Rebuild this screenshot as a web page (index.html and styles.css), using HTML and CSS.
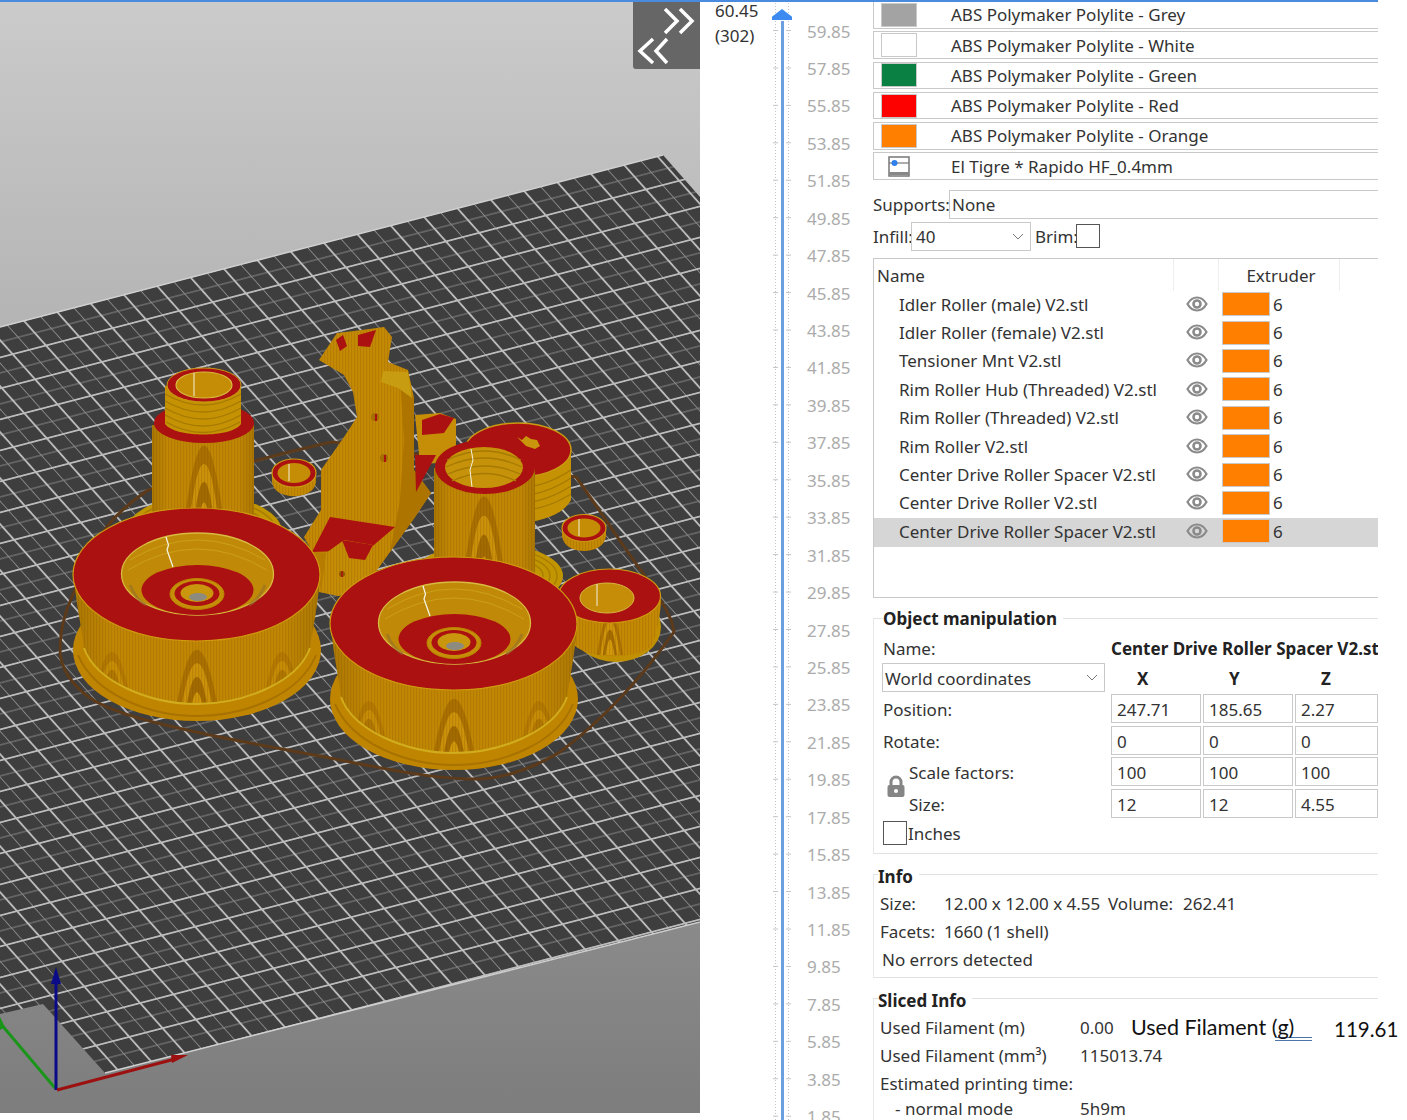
FILE: index.html
```html
<!DOCTYPE html>
<html lang="en">
<head>
<meta charset="utf-8">
<title>Slicer preview</title>
<link rel="stylesheet" href="styles.css">
</head>
<body>
<svg class="sprites" aria-hidden="true">
  <symbol id="eye" viewBox="0 0 22 16">
    <path d="M1.500 8C4 3.600 7.300 1.500 11 1.500S18 3.600 20.500 8C18 12.400 14.700 14.500 11 14.500S4 12.400 1.500 8Z" fill="none" stroke="#8a8a8a" stroke-width="2.200"/>
    <circle cx="11" cy="8" r="3.500" fill="none" stroke="#8a8a8a" stroke-width="2.600"/>
  </symbol>
</svg>
<div class="topline"></div>
<main class="app">
  <section class="viewport">
    <svg class="scene" viewBox="0 0 700 1113" width="700" height="1113" aria-hidden="true">
      <defs>
        <pattern id="grid" width="100" height="100" patternUnits="userSpaceOnUse" patternTransform="matrix(.3333 -.0867 .2246 .2516 551.700 958)">
          <rect width="100" height="100" fill="#3e3e3e"/>
          <path d="M50 0V100M0 50H100" stroke="#8a8a8a" stroke-width="3"/>
          <path d="M0 0V100M100 0V100M0 0H100M0 100H100" stroke="#bcbcbc" stroke-width="6"/>
        </pattern>
        <pattern id="stripes" width="3" height="8" patternUnits="userSpaceOnUse">
          <rect width="1.200" height="8" fill="#7a4c00" opacity=".22"/>
        </pattern>
        <linearGradient id="shade" x1="0" x2="1" y1="0" y2="0">
          <stop offset="0" stop-color="#6a4600" stop-opacity=".28"/>
          <stop offset=".15" stop-color="#6a4600" stop-opacity=".04"/>
          <stop offset=".85" stop-color="#6a4600" stop-opacity=".04"/>
          <stop offset="1" stop-color="#6a4600" stop-opacity=".28"/>
        </linearGradient>
        <g id="arch">
          <path d="M-24 0C-17-40-10-78 0-78S17-40 24 0Z" fill="#ad7200"/>
          <path d="M-18 0C-13-32-8-62 0-62S13-32 18 0Z" fill="#d0950a"/>
          <path d="M-13 0C-9-24-6-46 0-46S9-24 13 0Z" fill="#a56c00"/>
          <path d="M-8 0C-6-14-3-28 0-28S6-14 8 0Z" fill="#d59a0c"/>
        </g>
        <path id="rollerBody" d="M74 578C77 610 82 628 84 648C96 682 150 704 197 704S298 682 310 648C313 628 317 610 320 578Z"/>
        <path id="colA" d="M152 425V540H254V425Z"/>
        <path id="colB" d="M434 468V585H535V468Z"/>
        <clipPath id="rollerClip"><use href="#rollerBody"/></clipPath>
        <clipPath id="colAClip"><use href="#colA"/></clipPath>
        <clipPath id="colBClip"><use href="#colB"/></clipPath>
        <g id="roller">
          <ellipse cx="197" cy="650" rx="124" ry="71" fill="#c08500"/>
          <path d="M78 655C95 695 150 716 197 716S300 695 316 655" fill="none" stroke="#a87200" stroke-width="2"/>
          <use href="#rollerBody" fill="#c58a04"/>
          <g clip-path="url(#rollerClip)">
            <use href="#arch" transform="translate(197 716) scale(.95 .85)"/>
            <use href="#arch" transform="translate(112 695) scale(.75 .55)" opacity=".55"/>
            <use href="#arch" transform="translate(282 695) scale(.75 .55)" opacity=".55"/>
          </g>
          <use href="#rollerBody" fill="url(#stripes)"/>
          <use href="#rollerBody" fill="url(#shade)"/>
          <path d="M84 648C96 682 150 704 197 704S298 682 310 648" fill="none" stroke="#d1ac1c" stroke-width="2"/>
          <ellipse cx="196.500" cy="574.500" rx="123.500" ry="66.500" fill="#ab1111" stroke="#cf9a10" stroke-width="1.200"/>
          <ellipse cx="197.500" cy="574" rx="76" ry="41" fill="#c08a08" stroke="#d8bb40" stroke-width="1.300"/>
          <path d="M130 560Q197 520 265 560M128 570Q197 528 267 570" fill="none" stroke="#d2a820" stroke-width="1" opacity=".7"/>
          <path d="M130 585Q136 600 146 605M265 585Q259 600 249 605" fill="none" stroke="#93702a" stroke-width="3" opacity=".6"/>
          <ellipse cx="197.500" cy="590" rx="56" ry="25" fill="#ab1111"/>
          <ellipse cx="197" cy="594" rx="27" ry="15.500" fill="#c68e08" stroke="#b88200" stroke-width="1"/>
          <ellipse cx="197" cy="593.500" rx="22.500" ry="12.500" fill="#ab1111"/>
          <ellipse cx="197" cy="593" rx="16.500" ry="9" fill="#c9960e"/>
          <ellipse cx="198" cy="597" rx="9" ry="4" fill="#8d8a80"/>
          <path d="M166 537L168.500 545 167 550 173 567" fill="none" stroke="#f4f1e0" stroke-width="1.300"/>
        </g>
      </defs>

      <polygon class="plate" points="0,327 663,155 700,197 700,922 105,1073 43,1004 0,1014"/>
      <path class="plate-edge" d="M0 327L663 155M700 922L105 1073"/>
      <path class="skirt" d="M60 650C60 620 70 600 86 566C96 536 112 515 148 490C220 470 300 448 333 442L576 477C600 510 625 550 643 573C660 600 672 615 674 632C640 680 600 722 560 752C530 770 500 780 470 779C430 778 390 770 340 760C290 750 240 742 187 730C150 722 110 712 90 698C72 685 60 668 60 650Z"/>

      <!-- rear-left column -->
      <ellipse cx="204" cy="532" rx="78" ry="37" fill="#c09500"/>
      <g class="ridge">
        <ellipse cx="204" cy="532" rx="72" ry="33"/><ellipse cx="204" cy="532" rx="65" ry="29"/><ellipse cx="204" cy="532" rx="58" ry="25"/>
      </g>
      <use href="#colA" fill="#c58a04"/>
      <g clip-path="url(#colAClip)"><use href="#arch" transform="translate(204 534) scale(.9 1.130)"/></g>
      <use href="#colA" fill="url(#stripes)"/>
      <use href="#colA" fill="url(#shade)"/>
      <ellipse cx="204" cy="423" rx="50" ry="20" fill="#ab1111"/>
      <path d="M165 386V424C175 438 232 438 241 424V386Z" fill="#c59204"/>
      <g class="ridge">
        <path d="M165 394Q203 416 241 394M165 401Q203 423 241 401M165 408Q203 430 241 408M165 415Q203 437 241 415M166 422Q203 443 240 422"/>
      </g>
      <ellipse cx="204" cy="385" rx="37" ry="17" fill="#ab1111" stroke="#c99a12" stroke-width="1"/>
      <ellipse cx="204" cy="385" rx="28" ry="13" fill="#c58c06" stroke="#d8bb40" stroke-width="1.200"/>
      <path d="M194 373V396" stroke="#f4f1e0" stroke-width="1"/>

      <!-- small ring, left -->
      <path d="M272 475V482C274 501 314 501 316 482V475Z" fill="#c58a04"/>
      <path d="M272 475V482C274 501 314 501 316 482V475Z" fill="url(#stripes)"/>
      <ellipse cx="294" cy="473" rx="22" ry="14" fill="#ab1111" stroke="#c99a12" stroke-width="1.200"/>
      <ellipse cx="294" cy="473" rx="16.500" ry="10" fill="#c58c06"/>
      <path d="M289 464V481" stroke="#f4f1e0" stroke-width="1"/>

      <!-- tensioner mount -->
      <path d="M319 360L337 333 362 330 384 327 392 337 388 362 408 370 414 398 414 470 431 493 415 517 375 573 370 583 339 596 319 592 315 556 304 537 321 510 321 470 344 437 357 417 353 392 344 375Z" fill="#c58a04"/>
      <path d="M319 360L337 333 362 330 384 327 392 337 388 362 408 370 414 398 414 470 431 493 415 517 375 573 370 583 339 596 319 592 315 556 304 537 321 510 321 470 344 437 357 417 353 392 344 375Z" fill="url(#stripes)"/>
      <path d="M400 378L414 398 414 470 431 493 415 517 390 552 400 500 404 440Z" fill="#ad7400"/>
      <path d="M358 335L376 330 370 347 358 346Z" fill="#ab1111"/>
      <path d="M336 340L343 335 347 346 340 351Z" fill="#ab1111"/>
      <path d="M383 371L408 372 412 398 398 388 381 382Z" fill="#c89c10"/>
      <path d="M415 415L440 413 456 419 456 462 420 464Z" fill="#c68d06"/>
      <path d="M422 420L440 414 454 418 444 433 422 435Z" fill="#ab1111"/>
      <path d="M415 455L436 455 416 492Z" fill="#ab1111"/>
      <circle cx="375" cy="417" r="4" fill="#a26f00"/><path d="M376 414V421" stroke="#ab1111" stroke-width="2"/>
      <circle cx="384" cy="458" r="4" fill="#a26f00"/><path d="M385 455V462" stroke="#ab1111" stroke-width="2"/>
      <path d="M330 517L395 527 368 550 312 552Z" fill="#ab1111"/>
      <path d="M326 553L344 540 373 545 370 583 339 596 321 592Z" fill="#c68d06"/>
      <path d="M326 553L344 540 373 545 370 583 339 596 321 592Z" fill="url(#stripes)"/>
      <path d="M342 540L373 545 365 560 349 558Z" fill="#ab1111"/>
      <path d="M304 537L312 552 326 553 321 592 315 556Z" fill="#b67c00"/>
      <circle cx="342" cy="574" r="3" fill="#8e5a00"/><path d="M342 571V577" stroke="#ab1111" stroke-width="1.500"/>

      <!-- rear disc -->
      <path d="M464 452V500C480 530 555 530 571 500V452Z" fill="#c59204"/>
      <g class="ridge">
        <path d="M464 470Q518 505 571 470M464 478Q518 513 571 478M464 486Q518 520 571 486M464 494Q518 527 571 494"/>
      </g>
      <ellipse cx="518" cy="450" rx="53" ry="27" fill="#ab1111" stroke="#c99a12" stroke-width="1.500"/>
      <path d="M517 437l5 3 4-4 5 3 6 1 3 6-5 3-9-3-4-4Z" fill="#c8950c"/>

      <!-- rear-right column -->
      <ellipse cx="488" cy="576" rx="75" ry="33" fill="#c09500"/>
      <g class="ridge">
        <ellipse cx="488" cy="576" rx="69" ry="29"/><ellipse cx="488" cy="576" rx="62" ry="25"/><ellipse cx="488" cy="576" rx="55" ry="21"/>
      </g>
      <use href="#colB" fill="#c58a04"/>
      <g clip-path="url(#colBClip)"><use href="#arch" transform="translate(484 590) scale(.95 1.200)"/></g>
      <use href="#colB" fill="url(#stripes)"/>
      <use href="#colB" fill="url(#shade)"/>
      <ellipse cx="485" cy="467" rx="50" ry="27" fill="#ab1111"/>
      <ellipse cx="484" cy="467.500" rx="39" ry="20.500" fill="#c5920a"/>
      <g class="ridge">
        <path d="M447 460Q484 442 521 460M446 467Q484 449 522 467M448 474Q484 458 520 474M452 481Q484 466 516 481"/>
      </g>
      <path d="M471 449L473 460 470 470 472 487" fill="none" stroke="#f4f1e0" stroke-width="1"/>

      <!-- small ring, right -->
      <path d="M562 530V536C564 556 604 556 606 536V530Z" fill="#c58a04"/>
      <path d="M562 530V536C564 556 604 556 606 536V530Z" fill="url(#stripes)"/>
      <ellipse cx="584" cy="528" rx="22" ry="13.500" fill="#ab1111" stroke="#c99a12" stroke-width="1.200"/>
      <ellipse cx="584" cy="528" rx="16.500" ry="9.500" fill="#c58c06"/>
      <path d="M579 519V536" stroke="#f4f1e0" stroke-width="1"/>

      <!-- rim roller -->
      <ellipse cx="616" cy="627" rx="45" ry="35" fill="#c09000"/>
      <path d="M564 600C568 625 572 640 574 645C590 660 640 660 652 645C656 635 660 620 661 600Z" fill="#c58a04"/>
      <use href="#arch" transform="translate(610 655) scale(.55 .55)"/>
      <path d="M564 600C568 625 572 640 574 645C590 660 640 660 652 645C656 635 660 620 661 600Z" fill="url(#stripes)"/>
      <ellipse cx="609.500" cy="596" rx="51" ry="27" fill="#ab1111" stroke="#cf9a10" stroke-width="1.200"/>
      <ellipse cx="607" cy="598" rx="27" ry="15" fill="#c68e08" stroke="#d8bb40" stroke-width="1"/>
      <path d="M597 584V606" stroke="#f4f1e0" stroke-width="1"/>

      <use href="#roller"/>
      <use href="#roller" x="257" y="49"/>

      <!-- axes -->
      <g class="axes">
        <path d="M55 1088L0 1023" stroke="#1a951a" stroke-width="3"/>
        <path d="M0 1017L5 1027 0 1030Z" fill="#1a951a"/>
        <path d="M56 1090V980" stroke="#0b0b88" stroke-width="3"/>
        <path d="M56 967L61 984H51Z" fill="#0b0b88"/>
        <path d="M57 1090L175 1059" stroke="#9c1010" stroke-width="3"/>
        <path d="M188 1055L172 1063 171 1055Z" fill="#9c1010"/>
      </g>
    </svg>
    <button class="collapse" type="button" aria-label="Toggle sidebar">
      <svg viewBox="0 0 67 67" width="67" height="67">
        <path d="M32 7L44 19 32 31M47 7L59 19 47 31M20 37L7 49 20 61M34 37L23 49 34 61" fill="none" stroke="#fff" stroke-width="3.500"/>
      </svg>
    </button>
  </section>

  <section class="slider">
    <div class="readout"><span>60.45</span><span>(302)</span></div>
    <div class="track"><div class="thumb"></div><div class="rail"></div></div>
    <ol class="ticks">
      <li>59.85</li><li>57.85</li><li>55.85</li><li>53.85</li><li>51.85</li><li>49.85</li><li>47.85</li><li>45.85</li>
      <li>43.85</li><li>41.85</li><li>39.85</li><li>37.85</li><li>35.85</li><li>33.85</li><li>31.85</li><li>29.85</li>
      <li>27.85</li><li>25.85</li><li>23.85</li><li>21.85</li><li>19.85</li><li>17.85</li><li>15.85</li><li>13.85</li>
      <li>11.85</li><li>9.85</li><li>7.85</li><li>5.85</li><li>3.85</li><li>1.85</li>
    </ol>
  </section>

  <aside class="panel">
    <ul class="presets">
      <li class="preset"><span class="chip chip-grey"></span><span>ABS Polymaker Polylite - Grey</span></li>
      <li class="preset"><span class="chip chip-white"></span><span>ABS Polymaker Polylite - White</span></li>
      <li class="preset"><span class="chip chip-green"></span><span>ABS Polymaker Polylite - Green</span></li>
      <li class="preset"><span class="chip chip-red"></span><span>ABS Polymaker Polylite - Red</span></li>
      <li class="preset"><span class="chip chip-orange"></span><span>ABS Polymaker Polylite - Orange</span></li>
      <li class="preset"><span class="chip chip-icon">
        <svg viewBox="0 0 22 21" width="22" height="21"><rect x="1" y="1" width="20" height="19" fill="#fff" stroke="#777" stroke-width="1.500"/><path d="M1 7H21" stroke="#777" stroke-width="1.200"/><path d="M1 17.500H21" stroke="#888" stroke-width="3"/><circle cx="6.500" cy="7" r="3" fill="#2f80ed"/></svg>
      </span><span>El Tigre * Rapido HF_0.4mm</span></li>
    </ul>

    <div class="supports"><span>Supports:</span><span class="field field-wide">None</span></div>
    <div class="infill">
      <span>Infill:</span>
      <span class="field combo combo-infill">40<svg class="chev" viewBox="0 0 12 7" width="12" height="7"><path d="M1 1L6 6 11 1" fill="none" stroke="#777" stroke-width="1"/></svg></span>
      <span class="brim">Brim:</span><span class="checkbox"></span>
    </div>

    <div class="objects">
      <div class="objects-head"><span class="col-name">Name</span><span class="col-eye"></span><span class="col-ext">Extruder</span></div>
      <div class="obj"><span class="obj-name">Idler Roller (male) V2.stl</span><svg class="eye"><use href="#eye"/></svg><span class="obj-chip"></span><span class="obj-num">6</span></div>
      <div class="obj"><span class="obj-name">Idler Roller (female) V2.stl</span><svg class="eye"><use href="#eye"/></svg><span class="obj-chip"></span><span class="obj-num">6</span></div>
      <div class="obj"><span class="obj-name">Tensioner Mnt V2.stl</span><svg class="eye"><use href="#eye"/></svg><span class="obj-chip"></span><span class="obj-num">6</span></div>
      <div class="obj"><span class="obj-name">Rim Roller Hub (Threaded) V2.stl</span><svg class="eye"><use href="#eye"/></svg><span class="obj-chip"></span><span class="obj-num">6</span></div>
      <div class="obj"><span class="obj-name">Rim Roller (Threaded) V2.stl</span><svg class="eye"><use href="#eye"/></svg><span class="obj-chip"></span><span class="obj-num">6</span></div>
      <div class="obj"><span class="obj-name">Rim Roller V2.stl</span><svg class="eye"><use href="#eye"/></svg><span class="obj-chip"></span><span class="obj-num">6</span></div>
      <div class="obj"><span class="obj-name">Center Drive Roller Spacer V2.stl</span><svg class="eye"><use href="#eye"/></svg><span class="obj-chip"></span><span class="obj-num">6</span></div>
      <div class="obj"><span class="obj-name">Center Drive Roller V2.stl</span><svg class="eye"><use href="#eye"/></svg><span class="obj-chip"></span><span class="obj-num">6</span></div>
      <div class="obj obj-selected"><span class="obj-name">Center Drive Roller Spacer V2.stl</span><svg class="eye"><use href="#eye"/></svg><span class="obj-chip"></span><span class="obj-num">6</span></div>
    </div>

    <section class="group group-manip">
      <h2 class="group-title title-manip">Object manipulation</h2>
      <div class="name-row"><span class="name-label">Name:</span><strong class="name-value">Center Drive Roller Spacer V2.stl</strong></div>
      <div class="manip">
        <span class="field combo combo-coords"><span class="nudge">World coordinates</span><svg class="chev" viewBox="0 0 12 7" width="12" height="7"><path d="M1 1L6 6 11 1" fill="none" stroke="#777" stroke-width="1"/></svg></span>
        <strong class="axis">X</strong><strong class="axis">Y</strong><strong class="axis">Z</strong>
        <span class="m-label m-full">Position:</span><span class="field cell">247.71</span><span class="field cell">185.65</span><span class="field cell">2.27</span>
        <span class="m-label m-full">Rotate:</span><span class="field cell">0</span><span class="field cell">0</span><span class="field cell">0</span>
        <span class="lock"><svg viewBox="0 0 20 24" width="20" height="24"><path d="M5 10V7a5 5 0 0 1 10 0v3" fill="none" stroke="#858585" stroke-width="3"/><rect x="1.500" y="10" width="17" height="12" rx="2" fill="#858585"/><circle cx="10" cy="16" r="2" fill="#fff"/></svg></span>
        <span class="m-label">Scale factors:</span><span class="field cell">100</span><span class="field cell">100</span><span class="field cell">100</span>
        <span class="m-label">Size:</span><span class="field cell">12</span><span class="field cell">12</span><span class="field cell">4.55</span>
      </div>
      <div class="inches"><span class="checkbox"></span><span class="nudge">Inches</span></div>
    </section>

    <section class="group group-info">
      <h2 class="group-title title-info">Info</h2>
      <div class="info-row"><span class="info-key">Size:</span><span class="info-size">12.00 x 12.00 x 4.55</span><span class="info-vol">Volume:</span><span>262.41</span></div>
      <div class="info-row"><span class="info-key">Facets:</span><span>1660 (1 shell)</span></div>
      <div class="info-row info-ok">No errors detected</div>
    </section>

    <section class="group group-sliced">
      <h2 class="group-title title-info">Sliced Info</h2>
      <div class="info-row"><span class="sl-key">Used Filament (m)</span><span class="sl-val">0.00</span><span class="note note-label">Used Filament (<span class="squiggle">g)</span></span><span class="note note-num">119.61</span></div>
      <div class="info-row"><span class="sl-key">Used Filament (mm³)</span><span>115013.74</span></div>
      <div class="info-row"><span>Estimated printing time:</span></div>
      <div class="info-row info-mode"><span class="sl-mode">- normal mode</span><span>5h9m</span></div>
    </section>
  </aside>
</main>
</body>
</html>
```
FILE: styles.css
```css
* { box-sizing: border-box; }
html, body { margin: 0; padding: 0; height: 1120px; overflow: hidden; background: #fff; }
body { font-family: "Noto Sans", "Open Sans", sans-serif; font-size: 17px; color: #333; line-height: 1; position: relative; width: 1407px; }
ul, ol { list-style: none; margin: 0; padding: 0; }
h2 { margin: 0; }

.sprites { position: absolute; width: 0; height: 0; }
.topline { position: absolute; left: 0; top: 0; width: 1378px; height: 2px; background: #4a8be0; z-index: 2; }

.app { display: grid; grid-template-columns: 700px 173px 505px; height: 1120px; }

/* 3D view */
.viewport { position: relative; height: 1113px; background: linear-gradient(#cbcbcb, #7d7d7d); overflow: hidden; }
.scene { display: block; }
.plate { fill: url(#grid); }
.plate-edge { fill: none; stroke: #cfcfcf; stroke-width: 1.500; }
.skirt { fill: none; stroke: #5c3a1a; stroke-width: 3; }
.ridge { fill: none; stroke: #a67a00; stroke-width: 1.300; }
.collapse { position: absolute; right: 0; top: 2px; width: 67px; height: 67px; padding: 0; border: 0; border-bottom-left-radius: 3px; background: #666; }
.collapse svg { display: block; }

/* layer slider */
.slider { display: flex; height: 1120px; overflow: hidden; }
.readout { width: 72px; padding: 1.500px 0 0 15px; display: flex; flex-direction: column; gap: 7px; color: #333; font-size: 17px; line-height: 18px; }
.track { width: 20px; display: flex; flex-direction: column; align-items: center; padding-top: 9px;
  background-image:
    linear-gradient(#c4c4c4 0 1px, transparent 1px),
    linear-gradient(#c4c4c4 0 1px, transparent 1px),
    repeating-linear-gradient(#c4c4c4 0 1px, transparent 1px 3px),
    repeating-linear-gradient(#c4c4c4 0 1px, transparent 1px 3px);
  background-position: 1px 30px, 14px 30px, 3px 0, 16px 0;
  background-size: 5px 37.450px, 5px 37.450px, 1px 100%, 1px 100%;
  background-repeat: repeat-y, repeat-y, no-repeat, no-repeat; }
.thumb { width: 20px; height: 11px; background: #3d8bf0; clip-path: polygon(50% 0, 100% 70%, 100% 100%, 0 100%, 0 70%); flex: none; }
.rail { width: 3px; flex: 1; margin-top: 1px; background: #6c9fe0; }
.ticks { padding: 12.500px 0 0 15px; color: #ababab; font-size: 17px; }
.ticks li { height: 37.450px; line-height: 37.450px; }

/* right panel */
.panel { display: flex; flex-direction: column; height: 1120px; }
.panel > * { flex: none; }
.presets { display: flex; flex-direction: column; gap: 2.800px; padding-top: 1px; }
.preset { height: 27.500px; display: flex; align-items: center; border: 1px solid #c9c9c9; border-right: 0; padding-left: 7px; white-space: nowrap; }
.chip { width: 36px; height: 24px; margin-right: 34px; flex: none; border: 1px solid #c9c9c9; }
.chip-grey { background: #a3a3a3; }
.chip-white { background: #fff; }
.chip-green { background: #0b8043; }
.chip-red { background: #fd0000; }
.chip-orange { background: #ff8000; }
.chip-icon { border: 0; display: flex; align-items: center; justify-content: center; }

.field { display: flex; align-items: center; border: 1px solid #c9c9c9; background: #fff; }
.supports { display: flex; align-items: center; height: 29px; margin-top: 10px; }
.supports > span:first-child { width: 76px; flex: none; white-space: nowrap; }
.field-wide { height: 29px; flex: 1; padding-left: 2px; border-right: 0; }
.infill { display: flex; align-items: center; height: 29px; margin-top: 3px; }
.infill > span:first-child { width: 38px; flex: none; }
.combo { position: relative; height: 29px; justify-content: space-between; padding: 0 6px 0 4px; }
.combo-infill { width: 120px; }
.brim { margin-left: 4px; width: 41px; flex: none; white-space: nowrap; }
.checkbox { display: block; width: 24px; height: 24px; border: 1px solid #555; background: #fff; flex: none; }

.objects { height: 340px; margin-top: 7px; border: 1px solid #c9c9c9; border-right: 0; }
.objects-head { display: flex; height: 32px; align-items: center; }
.col-name { width: 300px; height: 100%; padding: 2px 0 0 3px; display: flex; align-items: center; border-right: 1px solid #eee; }
.col-eye { width: 45px; height: 100%; border-right: 1px solid #eee; }
.col-ext { width: 121px; height: 100%; padding: 2px 0 0 4px; display: flex; align-items: center; justify-content: center; border-right: 1px solid #eee; }
.obj { display: flex; align-items: center; height: 28.400px; }
.obj-name { width: 312px; padding: 0 0 2px 25px; white-space: nowrap; }
.obj-num { padding-bottom: 2px; }
.eye { width: 22px; height: 16px; margin-top: -3px; flex: none; }
.obj-chip { width: 48px; height: 24px; margin: -2px 3px 0 14px; background: #ff8000; border: 1px solid #c9c9c9; flex: none; }
.obj-selected { background: #d6d6d6; }

.group { border-top: 1px solid #e2e2e2; border-left: 1px solid #e8e8e8; border-bottom: 1px solid #e2e2e2; }
.group-title { font-size: 17px; font-weight: 700; line-height: 20px; margin-top: -10px; background: #fff; display: block; width: fit-content; padding-right: 6px; color: #222; }
.title-manip { margin-left: 9px; }
.title-info { margin: -8px 0 -2px 4px; }
.group-manip { height: 236px; margin-top: 20px; }
.name-row { display: flex; align-items: center; height: 24px; margin-top: 8px; padding-left: 9px; white-space: nowrap; overflow: hidden; }
.name-label { width: 228px; flex: none; }
.name-value { font-weight: 700; color: #222; }
.manip { display: grid; grid-template-columns: 25px 200px 90px 90px 83px; grid-auto-rows: 29px; gap: 2.400px 2px; margin: 2px 0 0 8px; }
.combo-coords { grid-column: 1 / 3; margin-right: 4px; padding-left: 2px; white-space: nowrap; }
.nudge { padding-top: 2px; }
.axis { display: flex; align-items: center; padding: 2px 0 0 26px; font-weight: 700; color: #222; }
.m-label { grid-column: 2; display: flex; align-items: center; padding-top: 2px; }
.m-full { grid-column: 1 / 3; padding-left: 1px; }
.lock { grid-column: 1; grid-row: span 2; display: flex; align-items: center; justify-content: center; padding-left: 2px; }
.cell { padding: 2px 0 0 5px; height: 29px; border-width: 1.500px; }
.inches { display: flex; align-items: center; margin: 3px 0 0 9px; height: 24px; }
.inches .checkbox { margin-right: 1px; }

.group-info { height: 104px; margin-top: 20px; }
.group-sliced { margin-top: 20px; border-bottom: 0; flex: 1; }
.info-row { display: flex; align-items: center; height: 28px; padding-left: 6px; white-space: nowrap; }
.group-info .group-title + .info-row { margin-top: 5px; }
.info-key { width: 64px; flex: none; }
.info-size { width: 164px; flex: none; }
.info-vol { width: 75px; flex: none; }
.info-ok { padding-left: 8px; }
.group-sliced .group-title + .info-row { margin-top: 5px; }
.sl-key { width: 200px; flex: none; }
.sl-val { width: 51px; flex: none; }
.note { font-family: "Lato", "Open Sans", sans-serif; font-size: 21.500px; color: #111; padding-top: 2px; }
.note-num { font-size: 20.500px; }
.note-label { width: 203px; flex: none; }
.squiggle { display: inline-block; padding: 0 18px 0 2px; margin: 0 -18px 0 -2px; border-bottom: 4px double #4d74ab; line-height: 20px; }
.info-mode { height: 24px; margin-top: -1px; }
.sl-mode { width: 200px; padding-left: 15px; flex: none; }
```
